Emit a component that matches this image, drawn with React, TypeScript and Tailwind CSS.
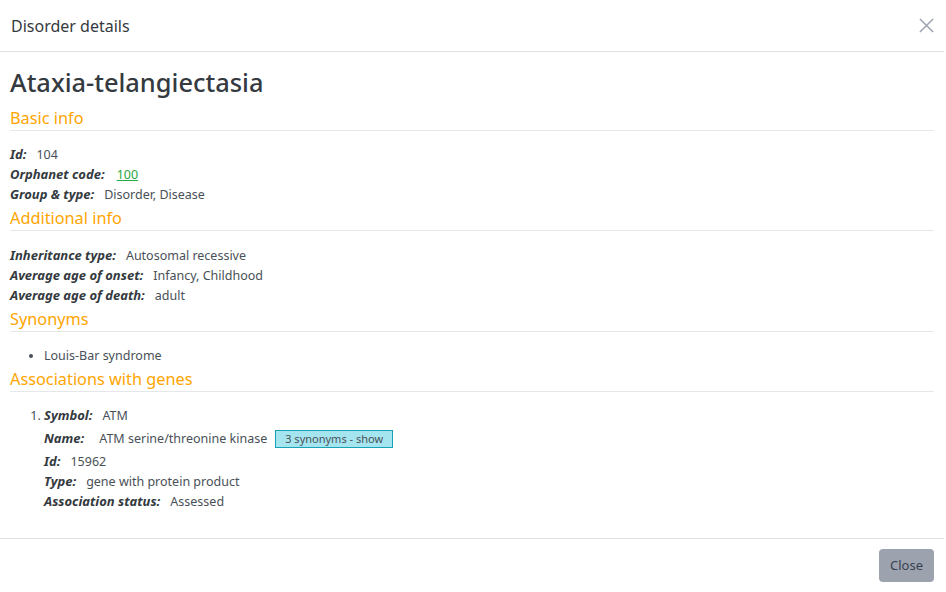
import React from 'react';

const font = { fontFamily: '"Noto Sans", "Open Sans", sans-serif' };

function Field({ label, children }: { label: string; children: React.ReactNode }) {
  return (
    <div className="h-5 flex items-center text-[12.5px]">
      <span className="font-bold italic text-[13px] text-[#343a40]">{label}:</span>
      <span className="ml-[10px] text-[#495057]">{children}</span>
    </div>
  );
}

function Section({ title }: { title: string }) {
  return (
    <div className="border-b border-[#e5e7eb] h-[25px] flex items-center text-[16.3px] text-[#ffa500]">
      {title}
    </div>
  );
}

export default function App() {
  return (
    <div className="w-[944px] h-[592px] bg-white flex flex-col" style={font}>
      <header className="h-[52px] pl-[11px] pr-[10px] flex items-center justify-between border-b border-[#dee2e6]">
        <h1 className="text-[16px] text-[#343a40]">Disorder details</h1>
        <button className="text-[#9ca3af]">
          <svg width="15" height="15" viewBox="0 0 16 16" fill="none" stroke="currentColor" strokeWidth="1.6">
            <path d="M1 1L15 15M15 1L1 15" />
          </svg>
        </button>
      </header>

      <main className="flex-1 px-[10px] pt-[14px]">
        <h2 className="text-[25.4px] font-medium text-[#343a40] leading-8 mb-[8px]">Ataxia-telangiectasia</h2>

        <Section title="Basic info" />
        <div className="pt-[14px] pb-[1px]">
          <Field label="Id">104</Field>
          <Field label="Orphanet code">
            <a className="text-[#28a745] underline ml-[2px]">100</a>
          </Field>
          <Field label="Group & type">Disorder, Disease</Field>
        </div>

        <Section title="Additional info" />
        <div className="pt-[15px] pb-[1px]">
          <Field label="Inheritance type">Autosomal recessive</Field>
          <Field label="Average age of onset">Infancy, Childhood</Field>
          <Field label="Average age of death">adult</Field>
        </div>

        <Section title="Synonyms" />
        <ul className="pt-[14px] pb-[1px] pl-[34px] list-disc text-[12.5px] text-[#495057]">
          <li className="h-5 leading-5">Louis-Bar syndrome</li>
        </ul>

        <Section title="Associations with genes" />
        <ol className="pt-[14px] pl-[34px] list-decimal text-[12.5px] text-[#495057]">
          <li>
            <Field label="Symbol">ATM</Field>
            <div className="h-[26px] flex items-center text-[12.5px]">
              <span className="font-bold italic text-[13px] text-[#343a40]">Name:</span>
              <span className="ml-[15px] text-[#495057]">ATM serine/threonine kinase</span>
              <span className="ml-[8px] px-[9px] h-[18px] flex items-center bg-[#a5e5f0] border border-[#17a2b8] text-[#495057] text-[11px]">
                3 synonyms - show
              </span>
            </div>
            <Field label="Id">15962</Field>
            <Field label="Type">gene with protein product</Field>
            <Field label="Association status">Assessed</Field>
          </li>
        </ol>
      </main>

      <footer className="h-[54px] border-t border-[#dee2e6] flex items-center justify-end pr-[10px]">
        <button className="h-[33px] px-[11px] rounded-[4px] bg-[#9ca3af] text-[#374151] text-[13px]">Close</button>
      </footer>
    </div>
  );
}
